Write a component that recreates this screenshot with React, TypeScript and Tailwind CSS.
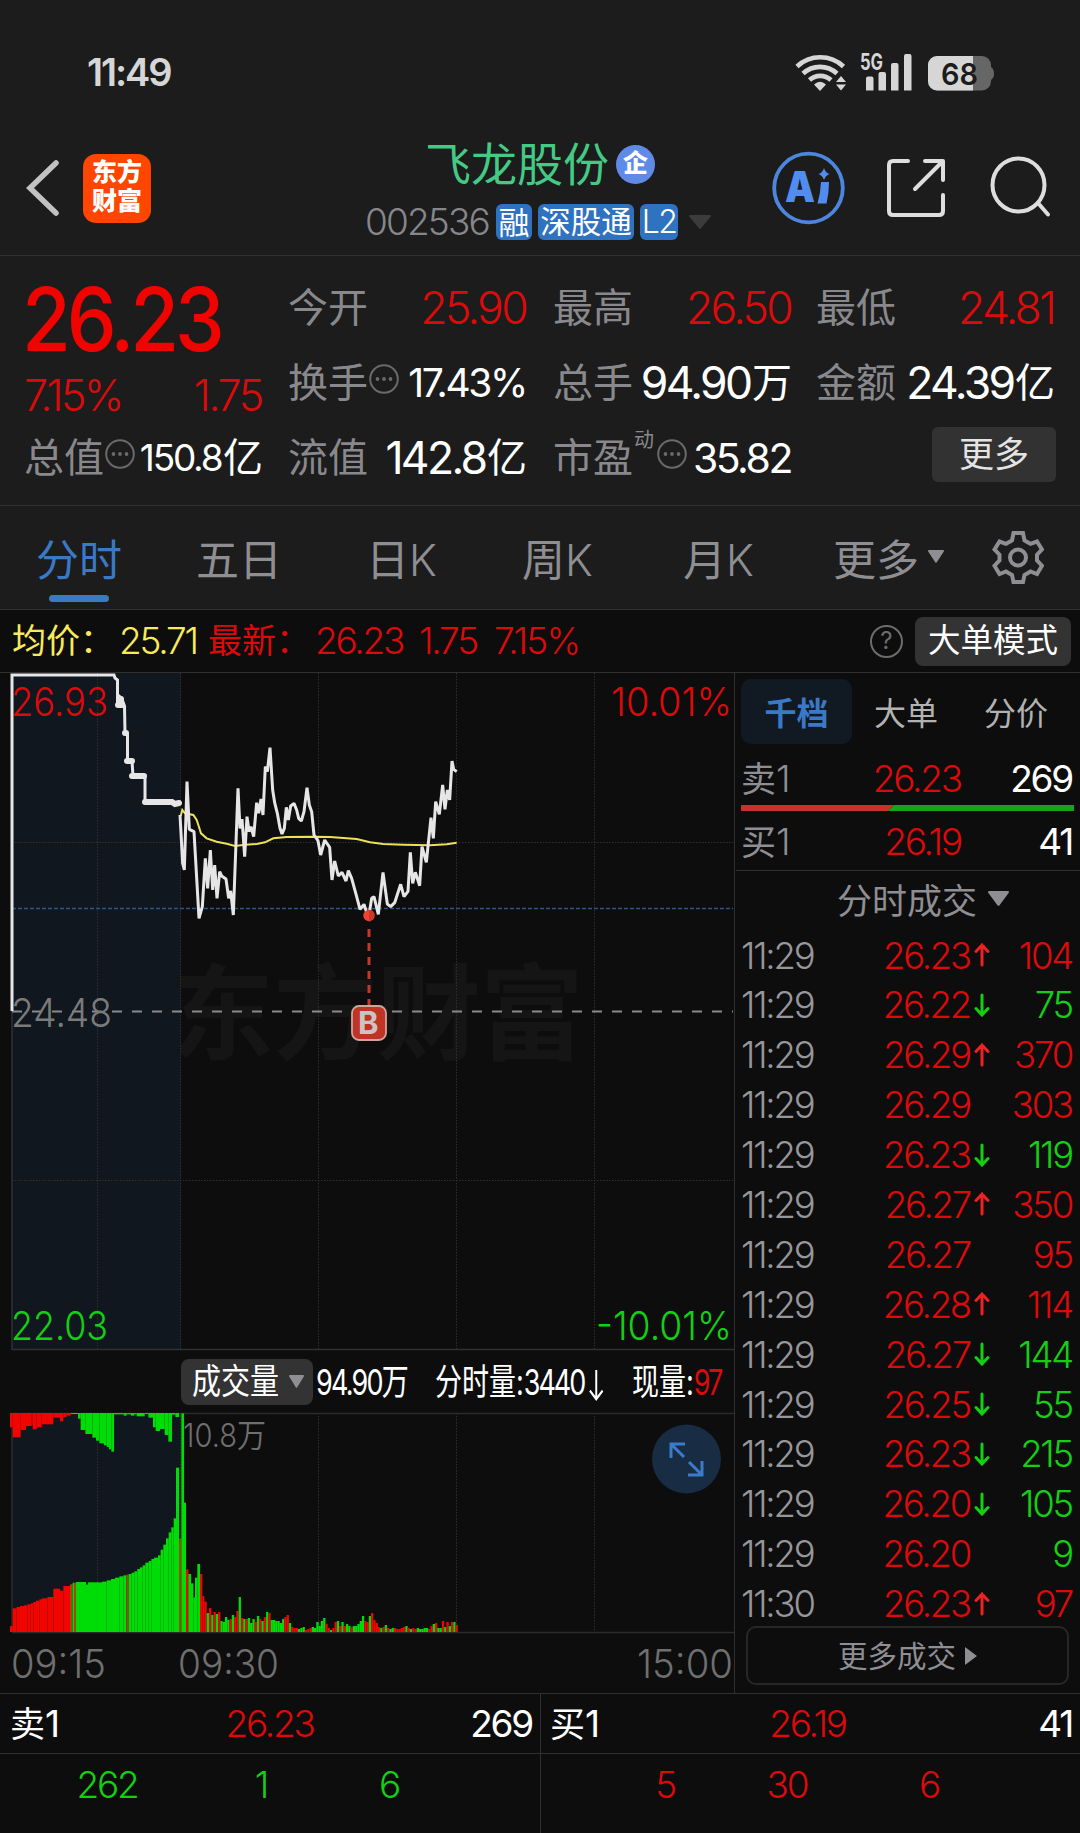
import React from 'react';

interface Tick {
  time: string;
  price: string;
  dir?: 'up' | 'down';
  vol: number;
  side: 'buy' | 'sell';
}

const ticks: Tick[] = [
  { time: '11:29', price: '26.23', dir: 'up', vol: 104, side: 'buy' },
  { time: '11:29', price: '26.22', dir: 'down', vol: 75, side: 'sell' },
  { time: '11:29', price: '26.29', dir: 'up', vol: 370, side: 'buy' },
  { time: '11:29', price: '26.29', vol: 303, side: 'buy' },
  { time: '11:29', price: '26.23', dir: 'down', vol: 119, side: 'sell' },
  { time: '11:29', price: '26.27', dir: 'up', vol: 350, side: 'buy' },
  { time: '11:29', price: '26.27', vol: 95, side: 'buy' },
  { time: '11:29', price: '26.28', dir: 'up', vol: 114, side: 'buy' },
  { time: '11:29', price: '26.27', dir: 'down', vol: 144, side: 'sell' },
  { time: '11:29', price: '26.25', dir: 'down', vol: 55, side: 'sell' },
  { time: '11:29', price: '26.23', dir: 'down', vol: 215, side: 'sell' },
  { time: '11:29', price: '26.20', dir: 'down', vol: 105, side: 'sell' },
  { time: '11:29', price: '26.20', vol: 9, side: 'sell' },
  { time: '11:30', price: '26.23', dir: 'up', vol: 97, side: 'buy' },
];

// call auction, drawn as a stepped line
const auctionLine =
  '12,1011 12,675 114,675 115,678 117.5,680 117.5,706 120,697 122,699 124.5,706 125,733 127.5,734 127.5,760 132,761 133,776 145,776 145,802 172,802 175,804.5 179,803';

const priceLine =
  '30,345 38,490 43,510 51,245 58,388 72,395 87,655 97,620 106,475 113,565 121,450 128,570 134,495 141,595 149,515 155,528 168,537 176,595 182,573 190,645 204,265 210,385 216,357 224,470 231,350 237,395 243,380 251,410 260,308 266,340 273,297 279,345 286,200 292,215 300,143 308,270 314,308 322,340 330,385 336,402 343,385 349,322 355,360 362,318 372,310 380,330 386,355 394,363 402,335 411,263 418,315 425,335 432,405 444,422 452,465 464,420 479,442 486,540 494,483 505,528 516,517 528,543 535,512 545,535 560,590 570,628 582,613 590,638 597,645 605,595 612,590 625,643 639,517 652,612 662,620 674,608 692,553 702,590 714,574 721,457 728,550 736,517 749,557 756,440 769,487 783,353 790,415 797,305 808,343 818,255 825,328 832,270 839,300 846,183 851,208 860,215';

const avgLine =
  '32,348 37,330 45,340 70,345 80,360 86,378 93,400 110,415 140,425 170,431 195,438 225,434 260,432 285,427 310,415 350,411 430,410 480,411 560,417 600,427 640,432 700,434 780,436 830,433 860,428';

// [x, height, colour] of the auction bars, left edge of each step
const auctionBars: [number, number, string][] = [
  [30, 18, 'r'], [38, 71, 'r'], [50, 75, 'r'], [60, 78, 'r'], [72, 80, 'r'], [82, 83, 'r'], [92, 86, 'r'], [100, 90, 'r'],
  [108, 94, 'r'], [118, 98, 'r'], [126, 101, 'r'], [142, 105, 'r'], [160, 130, 'r'], [180, 124, 'r'], [190, 138, 'r'],
  [210, 143, 'm'], [218, 148, 'g'], [222, 148, 'm'], [228, 150, 'g'], [258, 142, 'g'], [264, 149, 'g'], [306, 151, 'g'], [320, 155, 'g'],
  [333, 159, 'g'], [345, 163, 'g'], [358, 167, 'g'], [370, 170, 'g'], [379, 172, 'm'], [386, 174, 'g'], [395, 178, 'g'], [403, 182, 'g'],
  [412, 189, 'g'], [420, 194, 'g'], [428, 200, 'g'], [436, 208, 'g'], [446, 213, 'g'], [454, 219, 'g'], [462, 223, 'g'],
  [474, 230, 'g'], [482, 247, 'g'], [490, 262, 'g'], [498, 281, 'g'], [506, 299, 'g'], [514, 314, 'g'], [521, 341, 'g'],
  [528, 493, 'g'], [537, 281, 'm'], [544, 656, 'g'], [552, 388, 'g'], [558, 188, 'r'], [565, 174, 'g'], [573, 146, 'g'],
  [580, 104, 'g'], [585, 163, 'g'], [592, 204, 'g'], [600, 174, 'r'], [607, 108, 'r'], [613, 91, 'r'], [620, 0, 'r'],
];

// unmatched auction volume, hangs from the top
const topBars: [number, number, string][] = [
  [30, 43, 'r'], [38, 73, 'r'], [62, 51, 'r'], [78, 39, 'r'], [95, 36, 'r'], [98, 49, 'r'], [110, 43, 'r'], [125, 34, 'r'],
  [160, 14, 'r'], [180, 25, 'r'], [190, 12, 'r'], [200, 8, 'r'], [212, 3, 'g'], [234, 17, 'g'], [242, 51, 'g'], [256, 63, 'g'],
  [277, 74, 'g'], [288, 83, 'g'], [298, 91, 'g'], [312, 97, 'g'], [320, 102, 'g'], [327, 109, 'g'], [334, 116, 'g'], [342, 4, 'g'],
  [371, 8, 'g'], [380, 4, 'g'], [393, 8, 'g'], [403, 4, 'g'], [410, 10, 'g'], [434, 3, 'g'], [445, 14, 'g'], [459, 43, 'g'], [467, 54, 'g'],
  [480, 48, 'g'], [494, 66, 'g'], [505, 86, 'g'], [516, 5, 'g'], [526, 12, 'g'], [537, 0, 'g'],
];

const sessionBars =
  '19g 24r 17g 20r 18g 20r 11g 10g 15g 12g 13r 17g 15r 21r 35g 14r 13g 13r 14g 9g 13g 10r 16g 13r 11g 15r 20g 19r 12g 12g 11g 11g 9g 13g 15r 17r 9g 5r 4r 4r 3g 4g 5g 2r 3r 4r 5g 4g 10g 6g 11g 14g 8r 4r 2g 4r 10r 11g 6r 10g 6r 8g 6g 5r 6g 6g 8g 11g 16g 11r 10r 16g 19r 12r 9r 5r 4g 5r 7g 4r 3g 4g 4r 3r 3r 4r 5r 6g 4r 3g 4r 3r 4g 3g 3g 4g 4g 3r 6r 8g 9r 4g 4g 11r 5g 10r 6g 10r 10g 7r';

const barColor = (c: string) => (c === 'r' ? '#f00500' : c === 'g' ? '#00dc05' : '#94500a');

const Down = ({ className }: { className: string }) => (
  <svg viewBox="0 0 20 14" preserveAspectRatio="none" className={className}>
    <path d="M1 0h18a1 1 0 0 1 .8 1.6L11 13.2a1.3 1.3 0 0 1-2 0L.2 1.6A1 1 0 0 1 1 0z" fill="currentColor" />
  </svg>
);

const Dots = () => (
  <svg viewBox="0 0 30 30" className="h-[30px] w-[30px] shrink-0 text-[#6a6a6a]">
    <circle cx="15" cy="15" r="13.8" fill="none" stroke="currentColor" strokeWidth="2" />
    <circle cx="8.5" cy="15" r="1.9" fill="currentColor" />
    <circle cx="15" cy="15" r="1.9" fill="currentColor" />
    <circle cx="21.5" cy="15" r="1.9" fill="currentColor" />
  </svg>
);

const StatusBar = () => (
  <div className="flex h-[144px] items-start justify-between pl-[87px] pr-[86px]">
    <span className="mt-[48px] text-[38px] font-semibold leading-[48px] tracking-[-0.055em] text-[#d6d6d6]">11:49</span>
    <svg viewBox="794 42 200 50" className="mt-[42px] h-[50px] w-[200px]">
      <g fill="none" stroke="#d6d6d6" strokeWidth="4.600">
        <path d="M797 66.500a34 34 0 0 1 46.500 0" />
        <path d="M803 73.500a25 25 0 0 1 34 0" />
        <path d="M809.500 80a16 16 0 0 1 21.500 0" />
      </g>
      <path d="M814 84.500q6-5.500 12 0l-6 6.500z" fill="#d6d6d6" />
      <path d="M836 82l5-6 5 6zM836 84.500h10l-5 6z" fill="#d6d6d6" />
      <text x="860" y="69.500" textLength="23" lengthAdjust="spacingAndGlyphs" fontSize="22.500" fontWeight="700" fill="#d6d6d6">5G</text>
      <path d="M866 78.500q0-2 2-2h3.500q2 0 2 2V90.500h-7.500zM878.500 74q0-2 2-2h3.500q2 0 2 2v16.500h-7.500zM891 65q0-2 2-2h3.500q2 0 2 2v25.500H891zM904 56q0-2 2-2h3.500q2 0 2 2v34.500H904z" fill="#d6d6d6" />
      <rect x="928" y="56" width="63" height="34.500" rx="9" fill="#666" />
      <path d="M991 67q3 2 3 6.500t-3 6.500z" fill="#666" />
      <path d="M937 56h36v34.500h-36a9 9 0 0 1-9-9V65a9 9 0 0 1 9-9z" fill="#d6d6d6" />
      <text x="941" y="84.500" textLength="37" lengthAdjust="spacingAndGlyphs" fontSize="30" fontWeight="600" fill="#1c1c1c">68</text>
    </svg>
  </div>
);

const Header = () => (
  <div className="flex h-[112px] border-b border-[#303030]">
    <svg viewBox="24 158 40 60" className="ml-[24px] mt-[14px] h-[60px] w-[40px]">
      <path d="M56 163L30 188l26 25" fill="none" stroke="#c2c2c2" strokeWidth="5.500" strokeLinecap="round" />
    </svg>
    <div className="ml-[19px] mt-[10px] flex h-[69px] w-[68px] flex-col items-center justify-center rounded-[13px] bg-[#ff4600] text-[25px] font-black leading-[29px] text-white">
      <span className="-mt-[3px]">东方</span>
      <span>财富</span>
    </div>
    <div className="ml-[214px] w-[400px]">
      <div className="-mt-[6px] ml-[60px] flex h-[52px] items-center gap-[7px]">
        <span className="text-[46px] leading-[52px] text-[#43ca84]">飞龙股份</span>
        <span className="flex h-[39px] w-[39px] items-center justify-center rounded-full bg-[#5f8be6] text-[25px] font-black leading-none text-white">
          <span className="-mt-[2px]">企</span>
        </span>
      </div>
      <div className="mt-[14px] flex h-[36px] items-center">
        <span className="w-[131px] text-[37px] font-[350] tracking-[-0.05em] text-[#87878b]">002536</span>
        <span className="flex h-[36px] w-[36px] items-center justify-center rounded-md bg-[#2f72c0] text-[31px] leading-none text-white">融</span>
        <span className="ml-[6px] flex h-[36px] w-[96px] items-center justify-center rounded-md bg-[#2f72c0] text-[30.500px] leading-none text-white">深股通</span>
        <span className="ml-[6px] flex h-[36px] w-[38px] items-center justify-center rounded-md bg-[#2f72c0] text-[32px] font-[350] leading-none tracking-tighter text-white">L2</span>
        <Down className="ml-[11px] h-[14px] w-[22px] text-[#3b3b3b]" />
      </div>
    </div>
    <svg viewBox="770 150 300 76" className="ml-[5px] mt-[6px] h-[76px] w-[300px] shrink-0">
      <circle cx="808.500" cy="188" r="34.300" fill="none" stroke="#4d86de" strokeWidth="3.800" />
      <g fill="#518df0">
        <text x="785" y="202" fontSize="42" fontWeight="900" fontFamily="Inter" textLength="30" lengthAdjust="spacingAndGlyphs">A</text>
        <path d="M821 182h8q0 11-2.500 21.500h-9q3-10 3.500-21.500zM824 168q1.500 5 5.500 6-4 1.500-5.500 6-1.500-4.500-5.500-6 4-1 5.500-6z" />
      </g>
      <g fill="none" stroke="#dedede" strokeWidth="4" strokeLinecap="round" strokeLinejoin="round">
        <path d="M908 161h-15q-4 0-4 4v46q0 4 4 4h46q4 0 4-4v-16M925 161h18v19M942 162l-27 27" />
        <ellipse cx="1018.500" cy="185" rx="26" ry="26.500" />
        <path d="M1038 203l10 11.500" />
      </g>
    </svg>
  </div>
);

interface CellProps {
  label: string;
  value: string;
  unit?: string;
  red?: boolean;
  info?: boolean;
  sup?: string;
  size?: string;
}

const Cell: React.FC<CellProps> = ({ label, value, unit, red, info, sup, size = 'text-[44.5px]' }) => (
  <div className="flex h-[75px] items-center justify-between whitespace-nowrap">
    <div className="flex items-center text-[40px] leading-[50px] text-[#89898d]">
      {label}
      {sup && <span className="-mt-[36px] ml-[1px] mr-[2px] text-[20px] leading-[24px]">{sup}</span>}
      {info && <span className="-mt-[8px] ml-[1px]"><Dots /></span>}
    </div>
    <div className={`flex items-center leading-[50px] ${size} ${red ? 'font-[350] text-[#dc0a0a]' : 'font-[390] text-white'}`}>
      <span className="tracking-[-0.06em]">{value}</span>
      {unit && <span className="ml-[0.04em] mr-[-1px] text-[40px]">{unit}</span>}
    </div>
  </div>
);

const Quote = () => (
  <div className="flex h-[250px] border-b border-[#303030] pl-[24px] pr-[26px] pt-[14px]">
    <div className="w-[238px]">
      <div className="-ml-[2px] h-[100px] origin-left scale-x-[0.9] text-[88px] font-medium leading-[98px] tracking-[-0.05em] text-[#f00400]">26.23</div>
      <div className="flex h-[50px] items-center justify-between text-[43px] font-[350] tracking-[-0.055em] text-[#dc0a0a]">
        <span>7.15%</span>
        <span>1.75</span>
      </div>
      <Cell label="总值" info value="150.8" unit="亿" size="text-[37px]" />
    </div>
    <div className="ml-[26px] w-[238px]">
      <Cell label="今开" value="25.90" red />
      <Cell label="换手" info value="17.43%" size="text-[39px]" />
      <Cell label="流值" value="142.8" unit="亿" />
    </div>
    <div className="ml-[27px] w-[238px]">
      <Cell label="最高" value="26.50" red />
      <Cell label="总手" value="94.90" unit="万" />
      <Cell label="市盈" sup="动" info value="35.82" size="text-[41px]" />
    </div>
    <div className="ml-[25px] w-[238px]">
      <Cell label="最低" value="24.81" red />
      <Cell label="金额" value="24.39" unit="亿" />
      <div className="-mr-[2px] mt-[7px] ml-auto flex h-[55px] w-[124px] items-center justify-center rounded-md bg-[#323232] text-[35px] text-[#e4e4e4]">更多</div>
    </div>
  </div>
);

const Tabs = () => (
  <div className="flex h-[104px] items-center border-b border-[#303030] pt-[4px] text-[43px] leading-[50px] text-[#8e8e93]">
    <div className="relative ml-[36px] w-[160px] text-[#3a79c5]">
      分时
      <span className="absolute -bottom-[17px] left-[13px] h-[7px] w-[60px] rounded-full bg-[#3a79c5]" />
    </div>
    <span className="w-[170px]">五日</span>
    <span className="w-[156px]">日<span className="font-[350]">K</span></span>
    <span className="w-[161px]">周<span className="font-[350]">K</span></span>
    <span className="w-[150px]">月<span className="font-[350]">K</span></span>
    <span>更多</span>
    <Down className="ml-[9px] -mt-[6px] h-[13px] w-[16px]" />
    <svg viewBox="992 530 52 54" className="-mt-[6px] ml-[48px] h-[54px] w-[52px]" fill="none" stroke="currentColor" strokeWidth="4">
      <path d="M1013.500 533h9.500l1.500 7.500 6 3.300 6.500-2.300 5 8-5 5.200v5.800l5 5.200-5 8.300-6.500-2.500-6 3.500-1.500 7h-9.500l-1.500-7-6-3.500-6.500 2.500-5-8.300 5-5.200v-5.800l-5-5.200 5-8 6.500 2.300 6-3.300z" strokeLinejoin="miter" />
      <circle cx="1018" cy="557.500" r="8" />
    </svg>
  </div>
);

const AvgRow = () => (
  <div className="flex h-[63px] items-center whitespace-nowrap border-b border-[#303030] text-[37px] font-[350] leading-[46px] text-[#dc0a0a]">
    <span className="ml-[12px] text-[34px] font-normal text-[#f8ea5c]">均价：</span>
    <span className="ml-[5px] w-[89px] tracking-[-0.06em] text-[#f8ea5c]">25.71</span>
    <span className="text-[34px] font-normal">最新：</span>
    <span className="ml-[5px] w-[104px] tracking-[-0.06em]">26.23</span>
    <span className="w-[75px] tracking-[-0.06em]">1.75</span>
    <span className="tracking-[-0.05em]">7.15%</span>
    <div className="ml-auto flex h-[33px] w-[33px] items-center justify-center rounded-full border-[2.500px] border-[#6c6c6c] text-[24px] font-normal leading-none text-[#6c6c6c]">?</div>
    <div className="ml-[12px] mr-[9px] flex h-[49px] w-[156px] items-center justify-center rounded-lg bg-[#333] text-[32.500px] font-normal text-white">大单模式</div>
  </div>
);

const VolumeBars = () => {
  const fill = (list: [number, number, string][], top: boolean) =>
    list.slice(0, -1).map(([x, h, c], i) => (
      <rect
        key={x}
        x={x / 3}
        y={top ? 1413 : 1632 - h / 3}
        width={(list[i + 1][0] - x) / 3 + 0.05}
        height={h / 3}
        fill={barColor(c)}
      />
    ));
  return (
    <g>
      {fill(auctionBars, false)}
      {fill(topBars, true)}
      {sessionBars.split(' ').map((b, i) => (
        <rect key={i} x={206.7 + i * 2.283} y={1632 - parseInt(b)} width="2.300" height={parseInt(b)} fill={barColor(b.slice(-1))} />
      ))}
    </g>
  );
};

const PriceChart = () => (
  <svg viewBox="0 673 734 678" className="block h-[678px] w-[734px]">
    <rect x="12" y="673" width="169" height="677" fill="#10171e" />
    <text x="170" y="1052" fontSize="104" fontWeight="700" fill="#151515" textLength="414">东方财富</text>
    <g stroke="#303030" strokeWidth="1" strokeDasharray="1.500 1.500">
      <path d="M97.500 673v677M180.500 673v677M318.500 673v677M456.500 673v677M594.500 673v677M12 842.500h721M12 1180.500h721" />
    </g>
    <path d="M12 1011v339M12 1349.500h722" stroke="#303030" strokeWidth="1.500" />
    <path d="M12 908.500h721" stroke="#2c5685" strokeWidth="1.500" strokeDasharray="4 2" />
    <path d="M12 1011.500h721" stroke="#8a8a8a" strokeWidth="2" strokeDasharray="10 10" />
    <g fontSize="40" fontWeight="350">
      <text x="11" y="716" textLength="97" lengthAdjust="spacingAndGlyphs" fill="#dc0a0a">26.93</text>
      <text x="611" y="716" textLength="121" lengthAdjust="spacingAndGlyphs" fill="#dc0a0a">10.01%</text>
      <text x="11" y="1027" textLength="101" lengthAdjust="spacingAndGlyphs" fill="#7b7b7b">24.48</text>
      <text x="11" y="1340" textLength="97" lengthAdjust="spacingAndGlyphs" fill="#14cf14">22.03</text>
      <text x="596" y="1340" textLength="136" lengthAdjust="spacingAndGlyphs" fill="#14cf14">-10.01%</text>
    </g>
    <polyline points={avgLine} transform="translate(170 700) scale(.33333)" fill="none" stroke="#efe05a" strokeWidth="6" />
    <polyline points={auctionLine} fill="none" stroke="#e6e6e6" strokeWidth="3" />
    <path d="M118 705h4M121 699v5M125 733h1M127 761h5M132 776h12M145 802h27l3 2 4-1" fill="none" stroke="#e6e6e6" strokeWidth="6" strokeLinecap="round" />
    <polyline points={priceLine} transform="translate(170 700) scale(.33333)" fill="none" stroke="#e6e6e6" strokeWidth="9" strokeLinejoin="bevel" />
    <path d="M369 929v76" stroke="#c0392b" strokeWidth="3" strokeDasharray="8 6" />
    <circle cx="369" cy="915.500" r="5.700" fill="#f0432f" />
    <path d="M369 910a5.700 5.700 0 0 1 3 10l-3 2z" fill="#cf3526" />
    <rect x="352" y="1006" width="34" height="34" rx="7" fill="#bf3424" stroke="#d0a49c" strokeWidth="1.800" />
    <text x="358" y="1034" fontSize="31" fontWeight="700" fontFamily="Inter" fill="#cdc3c3">B</text>
  </svg>
);

const VolumeHeader = () => (
  <div className="flex h-[61px] items-center whitespace-nowrap pl-[181px] text-white">
    <div className="flex h-[46px] w-[132px] shrink-0 items-center rounded-lg bg-[#333] pl-[11px]">
      <span className="w-[97px] origin-left scale-x-[0.83] text-[35px]">成交量</span>
      <Down className="h-[13px] w-[15px] shrink-0 text-[#8e8e93]" />
    </div>
    <div className="ml-[3px] w-[119px] shrink-0">
      <div className="w-max origin-left scale-x-[0.75] text-[36px]"><span className="tracking-[-0.065em]">94.90</span>万</div>
    </div>
    <div className="w-[197px] shrink-0">
      <div className="w-max origin-left scale-x-[0.75] text-[36px]">分时量:<span className="tracking-[-0.075em]">3440</span>
        <svg viewBox="0 0 20 36" className="ml-[6px] inline h-[34px] w-[20px]" fill="none" stroke="currentColor" strokeWidth="2.800">
          <path d="M10 2v30M1 24l9 9 9-9" />
        </svg>
      </div>
    </div>
    <div className="w-max origin-left scale-x-[0.75] text-[36px]">现量:<span className="tracking-[-0.075em] text-[#dc0a0a]">97</span></div>
  </div>
);

const VolumeChart = () => (
  <svg viewBox="0 1412 734 281" className="block h-[281px] w-[734px]">
    <rect x="12" y="1413" width="169" height="219" fill="#10171e" />
    <path d="M97.500 1413v219M180.500 1413v219M318.500 1413v219M456.500 1413v219M594.500 1413v219" stroke="#303030" strokeDasharray="1.500 1.500" />
    <path d="M12 1413.500h722M12 1632.500h722M12 1413v219" fill="none" stroke="#2c2c2c" strokeWidth="1.500" />
    <VolumeBars />
    <g fill="#6f6f6f" fontSize="40" fontWeight="350">
      <text x="183" y="1447" fontSize="32" textLength="83" lengthAdjust="spacingAndGlyphs">10.8万</text>
      <text x="11" y="1678" textLength="95" lengthAdjust="spacingAndGlyphs">09:15</text>
      <text x="178" y="1678" textLength="101" lengthAdjust="spacingAndGlyphs">09:30</text>
      <text x="637" y="1678" textLength="96" lengthAdjust="spacingAndGlyphs">15:00</text>
    </g>
    <circle cx="686.500" cy="1459" r="34.500" fill="#182c43" />
    <path d="M671 1458v-14h14M672 1445l12 12M702 1461v14h-14M701 1474l-12-12" fill="none" stroke="#3a7bca" strokeWidth="3" />
  </svg>
);

const Level = ({ name, price, vol, className }: { name: string; price: string; vol: string; className: string }) => (
  <div className={`flex items-center pl-[5px] pr-[8px] text-[37px] font-[350] tracking-[-0.06em] ${className}`}>
    <span className="w-[108px] text-[#8e8e93]"><span className="text-[35px] font-normal tracking-normal">{name[0]}</span>{name[1]}</span>
    <span className="w-[112px] text-right text-[#dc0a0a]">{price}</span>
    <span className="flex-1 text-right font-[390] text-white">{vol}</span>
  </div>
);

const SidePanel = () => (
  <div className="h-[1020px] flex-1 border-l border-[#303030]">
    <div className="ml-[6px] mt-[6px] flex h-[65px] items-center text-[32px] text-[#b2b2b2]">
      <span className="flex h-[65px] w-[111px] items-center justify-center rounded-[10px] bg-[#111a23] pt-[4px] font-bold text-[#3a79c5]">千档</span>
      <span className="ml-[22px] w-[110px] pt-[4px]">大单</span>
      <span className="pt-[4px]">分价</span>
    </div>
    <Level name="卖1" price="26.23" vol="269" className="ml-px h-[61px] pt-[8px]" />
    <svg viewBox="0 0 333 6" className="ml-[6px] block h-[6px] w-[333px]">
      <path d="M0 0h153l-6 6H0z" fill="#c8312e" />
      <path d="M153 0h180v6H147z" fill="#17a41a" />
    </svg>
    <Level name="买1" price="26.19" vol="41" className="ml-px h-[60px] border-b border-[#303030] pt-[3px]" />
    <div className="flex h-[60px] items-center pl-[102px] text-[35px] text-[#8e8e93]">
      分时成交
      <Down className="ml-[11px] h-[15px] w-[21px] -translate-y-[3px]" />
    </div>
    <div className="pr-[8px] text-[36.500px] font-[350] tracking-[-0.06em]">
      {ticks.map((t, idx) => (
        <div key={idx} className="flex h-[49.900px] items-center pl-[6px]">
          <span className="w-[120px] text-[#97979b]">{t.time}</span>
          <span className="w-[109px] text-right text-[#dc0a0a]">{t.price}</span>
          <span className="w-[22px] pl-[4px]">
            {t.dir && (
              <svg viewBox="0 0 16 24" className={`h-[24px] w-[16px] -translate-y-px ${t.dir === 'up' ? 'text-[#ee2222]' : 'rotate-180 text-[#14cf14]'}`} fill="none" stroke="currentColor" strokeWidth="3" strokeLinecap="round">
                <path d="M8 2v20M2 8.500L8 2l6 6.500" />
              </svg>
            )}
          </span>
          <span className={`flex-1 text-right ${t.side === 'buy' ? 'text-[#dc0a0a]' : 'text-[#14cf14]'}`}>{t.vol}</span>
        </div>
      ))}
    </div>
    <div className="ml-[11px] mt-[-3px] flex h-[59px] w-[323px] items-center justify-center rounded-[10px] border-2 border-[#272727] text-[29.500px] text-[#8e8e93]">
      更多成交
      <svg viewBox="0 0 12 18" className="ml-[9px] h-[18px] w-[12px]"><path d="M0 0l12 9-12 9z" fill="currentColor" /></svg>
    </div>
  </div>
);

const BottomBook = () => (
  <div className="flex h-[140px] border-t border-[#303030] text-[37px] font-[350] tracking-[-0.06em]">
    <div className="w-[541px] border-r border-[#303030]">
      <div className="flex h-[60px] items-center justify-between border-b border-[#303030] pl-[10px] pr-[8px] font-[390] text-white">
        <span className="w-[177px]"><span className="text-[35px] tracking-normal">卖</span>1</span>
        <span className="font-[350] text-[#dc0a0a]">26.23</span>
        <span className="w-[180px] text-right">269</span>
      </div>
      <div className="flex h-[61px] items-center text-[#14cf14]">
        <span className="ml-[47px] w-[120px] text-center">262</span>
        <span className="ml-[34px] w-[120px] text-center">1</span>
        <span className="ml-[8px] w-[120px] text-center">6</span>
      </div>
    </div>
    <div className="flex-1">
      <div className="flex h-[60px] items-center justify-between border-b border-[#303030] pl-[9px] pr-[8px] font-[390] text-white">
        <span className="w-[177px]"><span className="text-[35px] tracking-normal">买</span>1</span>
        <span className="font-[350] text-[#dc0a0a]">26.19</span>
        <span className="w-[184px] text-right">41</span>
      </div>
      <div className="flex h-[61px] items-center text-[#dc0a0a]">
        <span className="ml-[64px] w-[120px] text-center">5</span>
        <span className="ml-[2px] w-[120px] text-center">30</span>
        <span className="ml-[22px] w-[120px] text-center">6</span>
      </div>
    </div>
  </div>
);

export default function App() {
  return (
    <div className="h-[1833px] w-[1080px] overflow-hidden bg-[#0d0d0d] font-['Inter','Noto_Sans_CJK_SC',sans-serif]">
      <div className="bg-[#1c1c1c]">
        <StatusBar />
        <Header />
        <Quote />
        <Tabs />
      </div>
      <AvgRow />
      <div className="flex">
        <div className="w-[734px]">
          <PriceChart />
          <VolumeHeader />
          <VolumeChart />
        </div>
        <SidePanel />
      </div>
      <BottomBook />
    </div>
  );
}
